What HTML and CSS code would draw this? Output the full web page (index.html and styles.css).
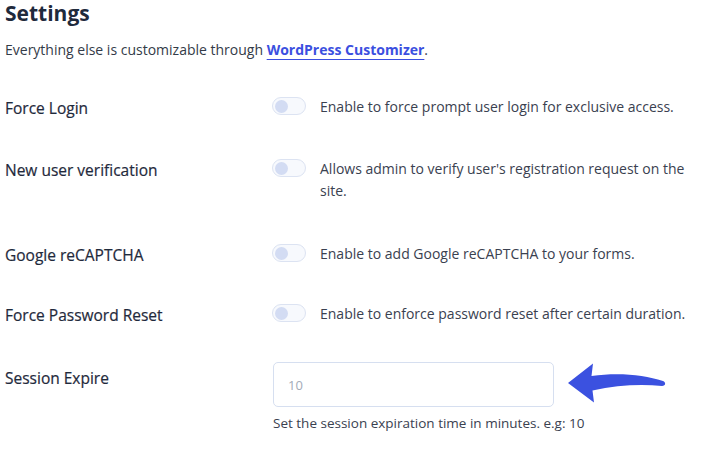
FILE: index.html
```html
<!DOCTYPE html>
<html>
<head>
<meta charset="utf-8">
<link rel="stylesheet" href="styles.css">
</head>
<body>
<div class="page">
  <h1 class="title">Settings</h1>
  <p class="intro">Everything else is customizable through <a class="link" href="#">WordPress Customizer</a>.</p>

  <div class="rows">
    <div class="row">
      <div class="label">Force Login</div>
      <div class="control">
        <span class="toggle"><span class="knob"></span></span>
        <span class="desc">Enable to force prompt user login for exclusive access.</span>
      </div>
    </div>
    <div class="row row-wide">
      <div class="label">New user verification</div>
      <div class="control">
        <span class="toggle"><span class="knob"></span></span>
        <span class="desc">Allows admin to verify user's registration request on the site.</span>
      </div>
    </div>
    <div class="row row-tight">
      <div class="label">Google reCAPTCHA</div>
      <div class="control">
        <span class="toggle"><span class="knob"></span></span>
        <span class="desc">Enable to add Google reCAPTCHA to your forms.</span>
      </div>
    </div>
    <div class="row row-last">
      <div class="label">Force Password Reset</div>
      <div class="control">
        <span class="toggle"><span class="knob"></span></span>
        <span class="desc">Enable to enforce password reset after certain duration.</span>
      </div>
    </div>
    <div class="row row-input">
      <div class="label label-input">Session Expire</div>
      <div class="field">
        <div class="input-line">
          <input class="input" type="text" placeholder="10">
          <svg class="arrow" width="100" height="42" viewBox="565 360 100 42">
            <path d="M567 381 L592 361.5 L590.5 374 C618 370 643 373 662 379 C665 380 665 384 661 384 C640 382 616 383 591.5 388.5 L593 400.5 Z" fill="#3b51e0"/>
          </svg>
        </div>
        <div class="help">Set the session expiration time in minutes. e.g: 10</div>
      </div>
    </div>
  </div>
</div>
</body>
</html>
```

FILE: styles.css
```css
* { box-sizing: border-box; }
html, body { margin: 0; padding: 0; background: #ffffff; }
body {
  font-family: "Open Sans", "Liberation Sans", sans-serif;
  color: #1e293b;
}
.page {
  padding: 0 0 0 5px;
  width: 725px;
}
.title {
  margin: 0;
  font-size: 21px;
  line-height: 26px;
  font-weight: 700;
  color: #1f2a3c;
}
.intro {
  margin: 12px 0 0 0;
  font-size: 14px;
  line-height: 24px;
  color: #333b48;
}
.link {
  color: #3b4fe0;
  font-weight: 700;
  text-decoration: underline;
  text-underline-offset: 4px;
  text-decoration-thickness: 1px;
}
.rows {
  margin-top: 34px;
  display: flex;
  flex-direction: column;
}
.row {
  display: grid;
  grid-template-columns: 267px 1fr;
  align-items: start;
  margin-bottom: 39px;
}
.row-wide { margin-bottom: 41px; }
.row-tight { margin-bottom: 37px; }
.row-last { margin-bottom: 36px; }
.label {
  font-size: 15.5px;
  line-height: 22px;
  font-weight: 500;
  color: #1f2a3c;
  padding-top: 1px;
  -webkit-text-stroke: 0.2px #1f2a3c;
}
.control {
  display: flex;
  align-items: flex-start;
  gap: 14px;
  padding-right: 30px;
}
.toggle {
  flex: none;
  width: 34px;
  height: 18px;
  margin-top: 1px;
  border: 1px solid #dce3f2;
  border-radius: 9px;
  background: #f7f9fd;
  display: flex;
  align-items: center;
  padding-left: 2px;
}
.knob {
  width: 13px;
  height: 13px;
  border-radius: 50%;
  background: #d3dcf3;
}
.desc {
  font-size: 14px;
  line-height: 22px;
  color: #3a4150;
}
.row-input .label-input { padding-top: 5px; }
.field {
  display: flex;
  flex-direction: column;
  padding-left: 1px;
}
.input-line {
  display: flex;
  align-items: flex-start;
  gap: 12px;
}
.input {
  width: 281px;
  height: 45px;
  border: 1px solid #d6dff0;
  border-radius: 5px;
  padding: 0 14px;
  font-family: "Open Sans", "Liberation Sans", sans-serif;
  font-size: 13px;
  color: #333;
  outline: none;
}
.input::placeholder { color: #a3abb8; }
.arrow { flex: none; }
.help {
  margin-top: 7px;
  font-size: 13.5px;
  line-height: 18px;
  color: #3a4150;
}
```
